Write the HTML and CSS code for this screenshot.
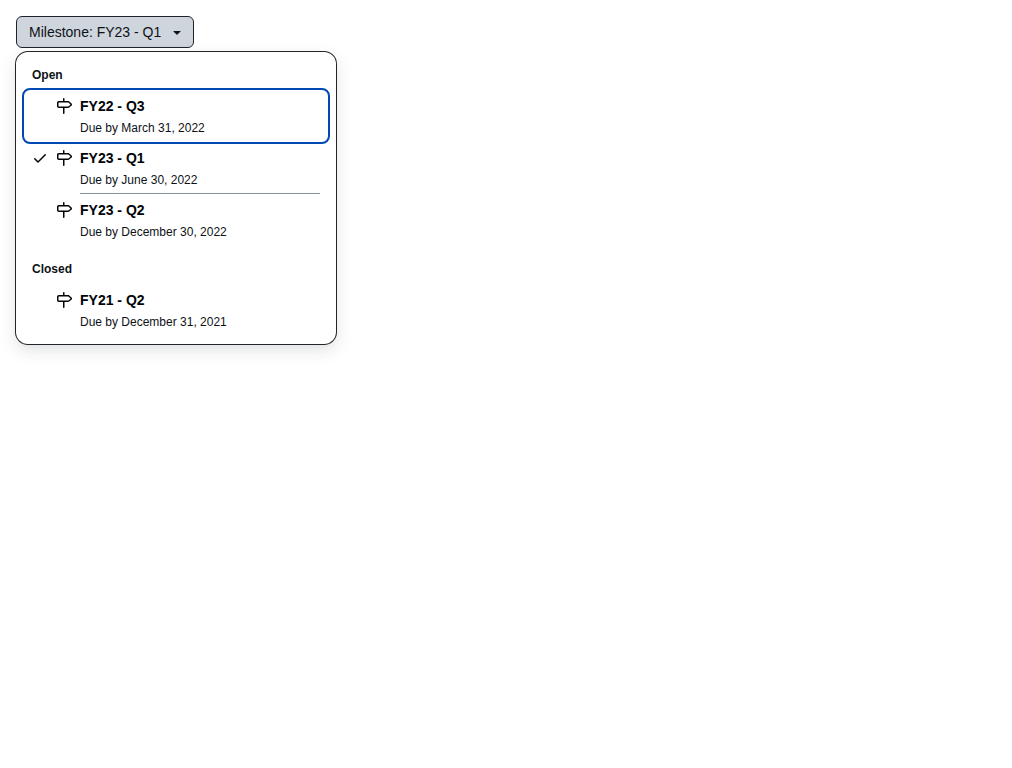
FILE: index.html
```
<!DOCTYPE html>
<html lang="en">
<head>
<meta charset="utf-8">
<meta name="viewport" content="width=device-width, initial-scale=1">
<title>Milestone</title>
<link rel="stylesheet" href="styles.css">
</head>
<body>
<svg class="sprite" aria-hidden="true">
  <symbol id="milestone" viewBox="0 0 16 16"><path d="M7.75 0a.75.75 0 0 1 .75.75V3h3.634c.414 0 .814.147 1.13.414l2.07 1.75a1.75 1.75 0 0 1 0 2.672l-2.07 1.75a1.75 1.75 0 0 1-1.13.414H8.5v5.25a.75.75 0 0 1-1.5 0V10H2.75A1.75 1.75 0 0 1 1 8.25v-3.5C1 3.784 1.784 3 2.75 3H7V.75A.75.75 0 0 1 7.75 0Zm4.384 8.5a.25.25 0 0 0 .161-.06l2.07-1.75a.248.248 0 0 0 0-.38l-2.07-1.75a.25.25 0 0 0-.161-.06H2.75a.25.25 0 0 0-.25.25v3.5c0 .138.112.25.25.25h9.384Z"/></symbol>
  <symbol id="check" viewBox="0 0 16 16"><path d="M13.78 4.22a.75.75 0 0 1 0 1.06l-7.25 7.25a.75.75 0 0 1-1.06 0L2.22 9.28a.751.751 0 0 1 .018-1.042.751.751 0 0 1 1.042-.018L6 10.94l6.72-6.72a.75.75 0 0 1 1.06 0Z"/></symbol>
  <symbol id="caret" viewBox="0 0 16 16"><path d="m4.427 7.427 3.396 3.396a.25.25 0 0 0 .354 0l3.396-3.396A.25.25 0 0 0 11.396 7H4.604a.25.25 0 0 0-.177.427Z"/></symbol>
</svg>
<main class="page">
  <button class="trigger" type="button" aria-haspopup="true" aria-expanded="true">
    <span>Milestone: FY23 - Q1</span>
    <svg class="icon" aria-hidden="true"><use href="#caret"/></svg>
  </button>
  <div class="overlay" role="menu" aria-label="Milestone">
    <section class="group" role="group" aria-labelledby="open">
      <h3 class="heading" id="open">Open</h3>
      <button class="item item-focused" type="button" role="menuitemradio" aria-checked="false">
        <span class="mark"></span>
        <svg class="icon" aria-hidden="true"><use href="#milestone"/></svg>
        <span class="body"><span class="title">FY22 - Q3</span><span class="due">Due by March 31, 2022</span></span>
      </button>
      <button class="item" type="button" role="menuitemradio" aria-checked="true">
        <svg class="icon" aria-hidden="true"><use href="#check"/></svg>
        <svg class="icon" aria-hidden="true"><use href="#milestone"/></svg>
        <span class="body body-divided"><span class="title">FY23 - Q1</span><span class="due">Due by June 30, 2022</span></span>
      </button>
      <button class="item" type="button" role="menuitemradio" aria-checked="false">
        <span class="mark"></span>
        <svg class="icon" aria-hidden="true"><use href="#milestone"/></svg>
        <span class="body"><span class="title">FY23 - Q2</span><span class="due">Due by December 30, 2022</span></span>
      </button>
    </section>
    <section class="group" role="group" aria-labelledby="closed">
      <h3 class="heading" id="closed">Closed</h3>
      <button class="item" type="button" role="menuitemradio" aria-checked="false">
        <span class="mark"></span>
        <svg class="icon" aria-hidden="true"><use href="#milestone"/></svg>
        <span class="body"><span class="title">FY21 - Q2</span><span class="due">Due by December 31, 2021</span></span>
      </button>
    </section>
  </div>
</main>
</body>
</html>
```

FILE: styles.css
```
* {
  box-sizing: border-box;
}

body {
  margin: 0;
  background: #fff;
  color: #0e1116;
  font: 14px/20px "Liberation Sans", Arial, sans-serif;
}

.sprite {
  position: absolute;
  width: 0;
  height: 0;
}

.page {
  display: flex;
  flex-direction: column;
  align-items: flex-start;
  gap: 4px;
  min-height: 100vh;
  padding: 16px;
}

.trigger {
  display: flex;
  align-items: center;
  gap: 8px;
  padding: 5px 8px 5px 12px;
  border: 1px solid #20252c;
  border-radius: 6px;
  background: #ced5dd;
  color: inherit;
  font: inherit;
}

.icon {
  flex: none;
  width: 16px;
  height: 16px;
  fill: currentColor;
}

.overlay {
  display: flex;
  flex-direction: column;
  gap: 8px;
  width: 320px;
  max-width: 100%;
  padding: 8px;
  border-radius: 12px;
  background: #fff;
  box-shadow: 0 0 0 1px #20252c, 0 6px 12px -3px rgba(37, 41, 46, 0.04), 0 6px 18px rgba(37, 41, 46, 0.12);
}

.heading {
  margin: 0;
  padding: 6px 8px;
  font-size: 12px;
  line-height: 18px;
}

.item {
  display: flex;
  gap: 8px;
  width: 100%;
  padding: 0 8px;
  border: 0;
  border-radius: 6px;
  background: none;
  color: #010409;
  font: inherit;
  text-align: left;
}

.item > .icon {
  margin-top: 8px;
}

.item-focused {
  outline: 2px solid #0349b4;
}

.mark {
  flex: none;
  width: 16px;
}

.body {
  display: flex;
  flex: 1;
  flex-direction: column;
  gap: 4px;
  padding: 6px 0 5px;
  border-bottom: 1px solid transparent;
}

.body-divided {
  border-bottom-color: #88929d;
}

.title {
  font-weight: 700;
}

.due {
  color: #0e1116;
  font-size: 12px;
  line-height: 16px;
}
```
